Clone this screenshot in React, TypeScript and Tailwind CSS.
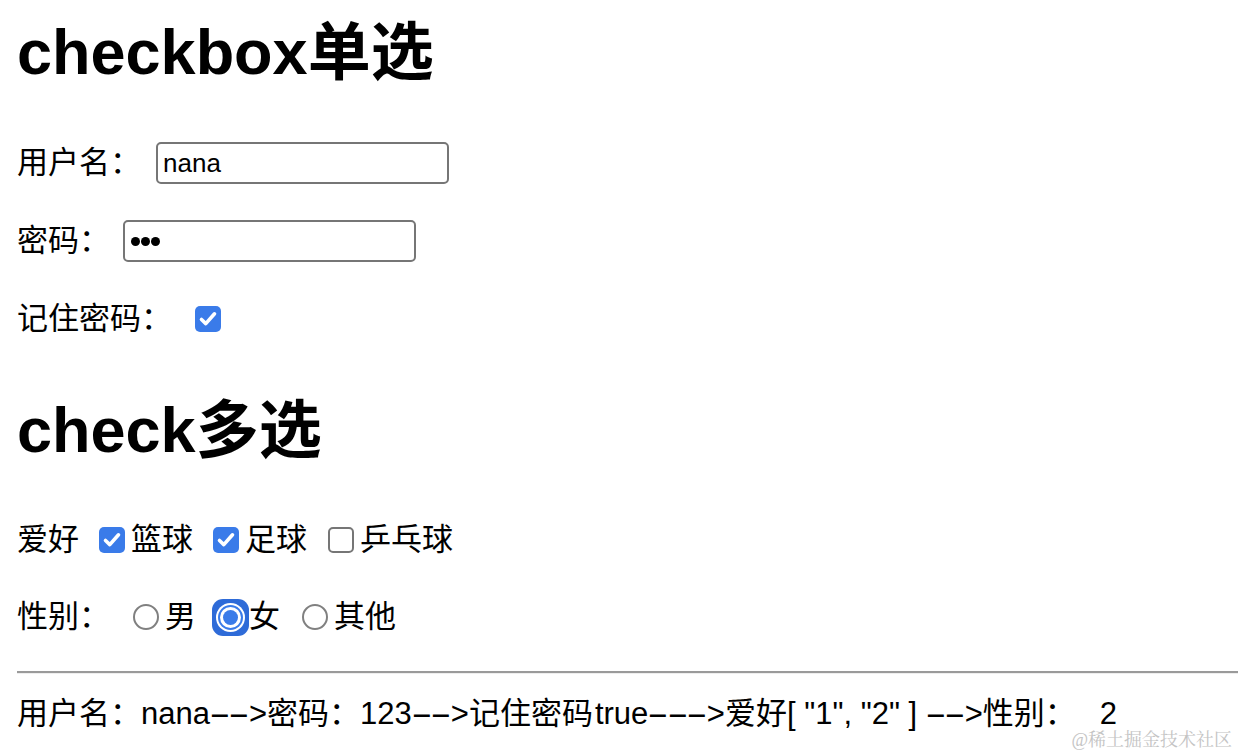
import React from 'react';

const font = "font-['Helvetica','Liberation_Sans','Noto_Sans_CJK_SC',sans-serif]";

const Check = ({ checked }: { checked?: boolean }) =>
  checked ? (
    <span className="inline-flex h-[26px] w-[26px] shrink-0 items-center justify-center rounded-[5px] bg-[#3a7be9]">
      <svg width="26" height="26" viewBox="0 0 26 26">
        <path d="M6.5 13.5 L10.8 17.6 L19.5 7.8" fill="none" stroke="white" strokeWidth="3.6" strokeLinecap="round" strokeLinejoin="round" />
      </svg>
    </span>
  ) : (
    <span className="inline-block h-[26px] w-[26px] shrink-0 rounded-[5px] border-2 border-[#767676] bg-white" />
  );

const Radio = ({ checked }: { checked?: boolean }) =>
  checked ? (
    <span className="inline-flex h-[37px] w-[37px] shrink-0 items-center justify-center rounded-[11px] bg-[#2e6bd8]">
      <span className="flex h-[29px] w-[29px] items-center justify-center rounded-full bg-white">
        <span className="flex h-[25px] w-[25px] items-center justify-center rounded-full bg-[#3a7be9]">
          <span className="flex h-[21px] w-[21px] items-center justify-center rounded-full bg-white">
            <span className="h-[15px] w-[15px] rounded-full bg-[#3a7be9]" />
          </span>
        </span>
      </span>
    </span>
  ) : (
    <span className="inline-block h-[26px] w-[26px] shrink-0 rounded-full border-2 border-[#808080] bg-white" />
  );

// wide hyphen as rendered by the original page's font
const D = () => <span className="inline-block w-[19.5px] scale-x-[2.1] text-center">-</span>;

export default function App() {
  return (
    <div className={`min-h-screen w-full overflow-hidden bg-white pl-[17px] text-black ${font}`}>
      <h1 className="mt-[17px] flex h-[70px] items-center text-[63px] font-bold leading-none">checkbox单选</h1>

      <div className="mt-[55px] flex h-[42px] items-center text-[31px]">
        <span className="w-[139px]">用户名：</span>
        <div className="flex h-[42px] w-[293px] items-center rounded-[5px] border-2 border-[#767676] px-[5px] text-[26px]">nana</div>
      </div>

      <div className="mt-[36px] flex h-[42px] items-center text-[31px]">
        <span className="w-[106px]">密码：</span>
        <div className="flex h-[42px] w-[293px] items-center gap-[1px] rounded-[5px] border-2 border-[#767676] px-[6px]">
          <span className="h-[9px] w-[9px] rounded-full bg-black" />
          <span className="h-[9px] w-[9px] rounded-full bg-black" />
          <span className="h-[9px] w-[9px] rounded-full bg-black" />
        </div>
      </div>

      <div className="mt-[36px] flex h-[42px] items-center text-[31px]">
        <span className="w-[178px]">记住密码：</span>
        <Check checked />
      </div>

      <h1 className="mt-[55px] flex h-[70px] items-center text-[63px] font-bold leading-none">check多选</h1>

      <div className="mt-[54px] flex h-[42px] items-center text-[31px]">
        <span className="mr-[20px]">爱好</span>
        <Check checked />
        <span className="ml-[6px] mr-[20px]">篮球</span>
        <Check checked />
        <span className="ml-[6px] mr-[21px]">足球</span>
        <Check />
        <span className="ml-[6px]">乒乓球</span>
      </div>

      <div className="mt-[35px] flex h-[42px] items-center text-[31px]">
        <span className="w-[116px]">性别：</span>
        <Radio />
        <span className="ml-[6px] mr-[16px]">男</span>
        <Radio checked />
        <span className="mr-[22px]">女</span>
        <Radio />
        <span className="ml-[6px]">其他</span>
      </div>

      <hr className="mt-[33px] border-0 border-t-2 border-b border-t-[#9a9a9a] border-b-[#eeeeee]" />

      <div className="mt-[23px] flex h-[34px] items-center whitespace-pre text-[31px] leading-[34px]">
        {'用户名：nana'}<D /><D />{'>密码：123'}<D /><D />{'>记住密码'}<span className="ml-[2px]">true</span><D /><D /><D />{'>爱好[ "1", "2" ] '}<D /><D />{'>性别：'}<span className="ml-[24px]">2</span>
      </div>

      <div className="absolute bottom-[3px] right-[6px] font-['Liberation_Serif','Noto_Serif_CJK_SC','Noto_Sans_CJK_SC',serif] text-[18px] leading-[18px] text-[#c4c4c4]">
        @稀土掘金技术社区
      </div>
    </div>
  );
}
